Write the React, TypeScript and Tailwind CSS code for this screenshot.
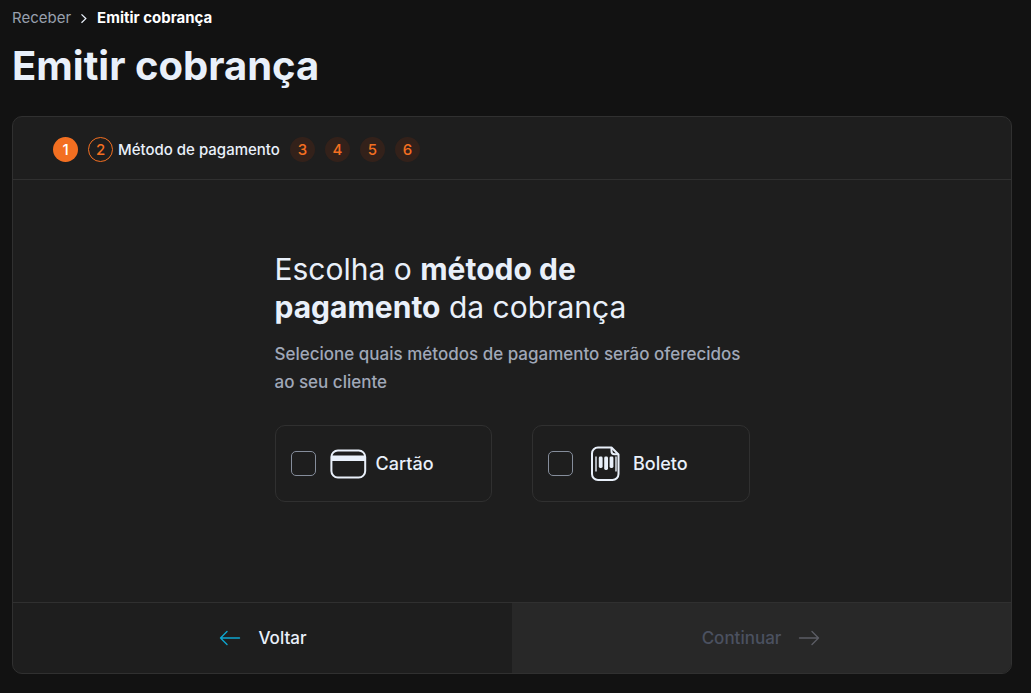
import React, { useState } from 'react'
import { clsx } from 'clsx'

const upcomingSteps = [3, 4, 5, 6]

type MethodProps = {
  label: string
  icon: React.ReactNode
  checked: boolean
  onChange: () => void
}

export default function App() {
  const [methods, setMethods] = useState<string[]>([])
  const canContinue = methods.length > 0

  const toggle = (name: string) => {
    setMethods((prev) => (prev.includes(name) ? prev.filter((m) => m !== name) : [...prev, name]))
  }

  return (
    <div className="min-h-screen bg-[#121212] pl-3 pr-[19px] pt-2 pb-[19px] font-['Inter',sans-serif] text-[#e9f0fa]">
      <nav aria-label="Breadcrumb">
        <ol className="flex items-center gap-2 text-[15px] leading-5">
          <li>
            <a href="#receber" className="text-[#98a0ae]">
              Receber
            </a>
          </li>
          <li aria-hidden="true">
            <ChevronIcon />
          </li>
          <li className="font-bold text-white" aria-current="page">
            Emitir cobrança
          </li>
        </ol>
      </nav>

      <h1 className="mt-3 text-[40px] leading-[52px] font-bold">Emitir cobrança</h1>

      <main className="mt-6 overflow-hidden rounded-[10px] border border-[#303030] bg-[#1e1e1e]">
        <ol className="flex items-center gap-[10px] border-b border-[#303030] px-10 pt-5 pb-[17px] text-[15px] leading-6">
          <li className="flex size-[25px] items-center justify-center rounded-full bg-[#f36f21] font-medium text-white">
            1
          </li>
          <li className="flex items-center gap-[5px] font-medium" aria-current="step">
            <span className="flex size-[25px] items-center justify-center rounded-full border border-[#f36f21] text-[#f36f21]">
              2
            </span>
            Método de pagamento
          </li>
          {upcomingSteps.map((step) => (
            <li
              key={step}
              className="flex size-[25px] items-center justify-center rounded-full bg-[#33211a] font-medium text-[#f36f21]"
            >
              {step}
            </li>
          ))}
        </ol>

        <section className="mx-auto w-[475px] max-w-full pt-[70px] pb-[100px]">
          <h2 className="max-w-[400px] text-[30px] leading-[38px]">
            Escolha o <strong className="font-bold">método de pagamento</strong> da cobrança
          </h2>
          <p className="mt-[14px] text-[17px] leading-7 font-medium text-[#a0a8b8]">
            Selecione quais métodos de pagamento serão oferecidos ao seu cliente
          </p>
          <div className="mt-[29px] grid grid-cols-2 gap-10">
            <Method
              label="Cartão"
              icon={<CardIcon />}
              checked={methods.includes('cartao')}
              onChange={() => toggle('cartao')}
            />
            <Method
              label="Boleto"
              icon={<BoletoIcon />}
              checked={methods.includes('boleto')}
              onChange={() => toggle('boleto')}
            />
          </div>
        </section>

        <div className="grid grid-cols-2 border-t border-[#303030] text-[17px] leading-[70px] font-medium">
          <button type="button" className="flex items-center justify-center gap-4">
            <ArrowIcon className="rotate-180 text-[#0ea5cf]" />
            Voltar
          </button>
          <button
            type="button"
            disabled={!canContinue}
            className={clsx(
              'flex items-center justify-center gap-4 bg-[#282828]',
              canContinue ? 'text-[#e9f0fa]' : 'text-[#4b5160]'
            )}
          >
            Continuar
            <ArrowIcon className={canContinue ? 'text-[#0ea5cf]' : 'text-[#5b5c64]'} />
          </button>
        </div>
      </main>
    </div>
  )
}

function Method({ label, icon, checked, onChange }: MethodProps) {
  return (
    <label className="flex h-[77px] cursor-pointer items-center rounded-[10px] border border-[#303030] pl-[15px] text-lg font-medium">
      <input
        type="checkbox"
        checked={checked}
        onChange={onChange}
        className="size-[25px] shrink-0 appearance-none rounded-[5px] border border-[#858d9b] checked:border-[#f36f21] checked:bg-[#f36f21]"
      />
      <span className="mr-2 ml-3">{icon}</span>
      {label}
    </label>
  )
}

function ChevronIcon() {
  return (
    <svg width="10" height="12" viewBox="0 0 10 12" fill="none" stroke="currentColor" strokeWidth="1.3">
      <path d="M2.5 2.4 6.8 6.6 2.5 10.8" />
    </svg>
  )
}

function CardIcon() {
  return (
    <svg width="40" height="40" viewBox="0 0 40 40" fill="none" stroke="currentColor" strokeWidth="2">
      <rect x="3.4" y="6.5" width="33.8" height="27" rx="6.5" />
      <path d="M3.4 14.3h33.8" strokeWidth="5.4" />
    </svg>
  )
}

function BoletoIcon() {
  return (
    <svg width="40" height="40" viewBox="0 0 40 40" fill="none" stroke="currentColor" strokeWidth="2" strokeLinejoin="round">
      <path d="M26.5 3.5H13a6 6 0 0 0-6 6V30a6 6 0 0 0 6 6h14.5a6 6 0 0 0 6-6V10.5z" />
      <path d="M26.5 3.5v3.8a3 3 0 0 0 3 3h4" />
      <path d="M11 12.5v15M31 12.5v15" strokeWidth="1.4" />
      <g fill="currentColor" stroke="none">
        <rect x="13.8" y="12.5" width="3.8" height="11.5" rx="1.4" />
        <rect x="19.2" y="12.5" width="3.8" height="13.5" rx="1.4" />
        <rect x="24.6" y="12.5" width="3.8" height="11.5" rx="1.4" />
      </g>
    </svg>
  )
}

function ArrowIcon({ className }: { className?: string }) {
  return (
    <svg
      width="24"
      height="24"
      viewBox="0 0 24 24"
      fill="none"
      stroke="currentColor"
      strokeWidth="1.4"
      strokeLinecap="round"
      strokeLinejoin="round"
      className={className}
    >
      <path d="M2.5 12h19M15 5.5l6.5 6.5-6.5 6.5" />
    </svg>
  )
}
